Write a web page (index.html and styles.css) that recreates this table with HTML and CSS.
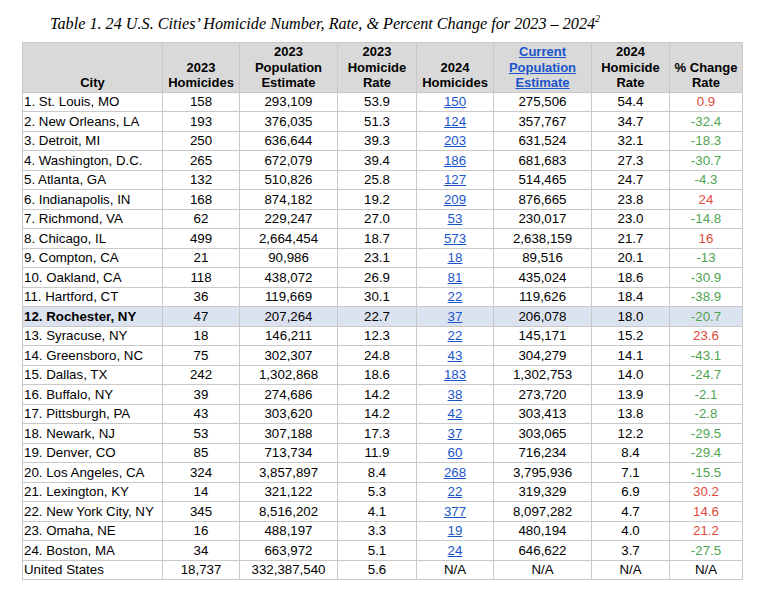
FILE: index.html
```html
<!DOCTYPE html>
<html>
<head>
<meta charset="utf-8">
<link rel="stylesheet" href="styles.css">
</head>
<body>
<p class="title">Table 1. 24 U.S. Cities’ Homicide Number, Rate, &amp; Percent Change for 2023 – 2024<sup>2</sup></p>
<table class="data">
<colgroup>
<col class="c1"><col class="c2"><col class="c3"><col class="c4"><col class="c5"><col class="c6"><col class="c7"><col class="c8">
</colgroup>
<thead>
<tr>
<th>City</th>
<th>2023<br>Homicides</th>
<th>2023<br>Population<br>Estimate</th>
<th>2023<br>Homicide<br>Rate</th>
<th>2024<br>Homicides</th>
<th><a class="lnk" href="#">Current<br>Population<br>Estimate</a></th>
<th>2024<br>Homicide<br>Rate</th>
<th>% Change<br>Rate</th>
</tr>
</thead>
<tbody>
<tr><td class="city">1. St. Louis, MO</td><td>158</td><td>293,109</td><td>53.9</td><td><a class="lnk" href="#">150</a></td><td>275,506</td><td>54.4</td><td class="up">0.9</td></tr>
<tr><td class="city">2. New Orleans, LA</td><td>193</td><td>376,035</td><td>51.3</td><td><a class="lnk" href="#">124</a></td><td>357,767</td><td>34.7</td><td class="down">-32.4</td></tr>
<tr><td class="city">3. Detroit, MI</td><td>250</td><td>636,644</td><td>39.3</td><td><a class="lnk" href="#">203</a></td><td>631,524</td><td>32.1</td><td class="down">-18.3</td></tr>
<tr><td class="city">4. Washington, D.C.</td><td>265</td><td>672,079</td><td>39.4</td><td><a class="lnk" href="#">186</a></td><td>681,683</td><td>27.3</td><td class="down">-30.7</td></tr>
<tr><td class="city">5. Atlanta, GA</td><td>132</td><td>510,826</td><td>25.8</td><td><a class="lnk" href="#">127</a></td><td>514,465</td><td>24.7</td><td class="down">-4.3</td></tr>
<tr><td class="city">6. Indianapolis, IN</td><td>168</td><td>874,182</td><td>19.2</td><td><a class="lnk" href="#">209</a></td><td>876,665</td><td>23.8</td><td class="up">24</td></tr>
<tr><td class="city">7. Richmond, VA</td><td>62</td><td>229,247</td><td>27.0</td><td><a class="lnk" href="#">53</a></td><td>230,017</td><td>23.0</td><td class="down">-14.8</td></tr>
<tr><td class="city">8. Chicago, IL</td><td>499</td><td>2,664,454</td><td>18.7</td><td><a class="lnk" href="#">573</a></td><td>2,638,159</td><td>21.7</td><td class="up">16</td></tr>
<tr><td class="city">9. Compton, CA</td><td>21</td><td>90,986</td><td>23.1</td><td><a class="lnk" href="#">18</a></td><td>89,516</td><td>20.1</td><td class="down">-13</td></tr>
<tr><td class="city">10. Oakland, CA</td><td>118</td><td>438,072</td><td>26.9</td><td><a class="lnk" href="#">81</a></td><td>435,024</td><td>18.6</td><td class="down">-30.9</td></tr>
<tr><td class="city">11. Hartford, CT</td><td>36</td><td>119,669</td><td>30.1</td><td><a class="lnk" href="#">22</a></td><td>119,626</td><td>18.4</td><td class="down">-38.9</td></tr>
<tr class="hl"><td class="city">12. Rochester, NY</td><td>47</td><td>207,264</td><td>22.7</td><td><a class="lnk" href="#">37</a></td><td>206,078</td><td>18.0</td><td class="down">-20.7</td></tr>
<tr><td class="city">13. Syracuse, NY</td><td>18</td><td>146,211</td><td>12.3</td><td><a class="lnk" href="#">22</a></td><td>145,171</td><td>15.2</td><td class="up">23.6</td></tr>
<tr><td class="city">14. Greensboro, NC</td><td>75</td><td>302,307</td><td>24.8</td><td><a class="lnk" href="#">43</a></td><td>304,279</td><td>14.1</td><td class="down">-43.1</td></tr>
<tr><td class="city">15. Dallas, TX</td><td>242</td><td>1,302,868</td><td>18.6</td><td><a class="lnk" href="#">183</a></td><td>1,302,753</td><td>14.0</td><td class="down">-24.7</td></tr>
<tr><td class="city">16. Buffalo, NY</td><td>39</td><td>274,686</td><td>14.2</td><td><a class="lnk" href="#">38</a></td><td>273,720</td><td>13.9</td><td class="down">-2.1</td></tr>
<tr><td class="city">17. Pittsburgh, PA</td><td>43</td><td>303,620</td><td>14.2</td><td><a class="lnk" href="#">42</a></td><td>303,413</td><td>13.8</td><td class="down">-2.8</td></tr>
<tr><td class="city">18. Newark, NJ</td><td>53</td><td>307,188</td><td>17.3</td><td><a class="lnk" href="#">37</a></td><td>303,065</td><td>12.2</td><td class="down">-29.5</td></tr>
<tr><td class="city">19. Denver, CO</td><td>85</td><td>713,734</td><td>11.9</td><td><a class="lnk" href="#">60</a></td><td>716,234</td><td>8.4</td><td class="down">-29.4</td></tr>
<tr><td class="city">20. Los Angeles, CA</td><td>324</td><td>3,857,897</td><td>8.4</td><td><a class="lnk" href="#">268</a></td><td>3,795,936</td><td>7.1</td><td class="down">-15.5</td></tr>
<tr><td class="city">21. Lexington, KY</td><td>14</td><td>321,122</td><td>5.3</td><td><a class="lnk" href="#">22</a></td><td>319,329</td><td>6.9</td><td class="up">30.2</td></tr>
<tr><td class="city">22. New York City, NY</td><td>345</td><td>8,516,202</td><td>4.1</td><td><a class="lnk" href="#">377</a></td><td>8,097,282</td><td>4.7</td><td class="up">14.6</td></tr>
<tr><td class="city">23. Omaha, NE</td><td>16</td><td>488,197</td><td>3.3</td><td><a class="lnk" href="#">19</a></td><td>480,194</td><td>4.0</td><td class="up">21.2</td></tr>
<tr><td class="city">24. Boston, MA</td><td>34</td><td>663,972</td><td>5.1</td><td><a class="lnk" href="#">24</a></td><td>646,622</td><td>3.7</td><td class="down">-27.5</td></tr>
<tr><td class="city">United States</td><td>18,737</td><td>332,387,540</td><td>5.6</td><td>N/A</td><td>N/A</td><td>N/A</td><td>N/A</td></tr>
</tbody>
</table>
</body>
</html>
```
FILE: styles.css
```css
html, body {
  margin: 0;
  padding: 0;
  background: #ffffff;
}
body {
  font-family: "Liberation Sans", Arial, sans-serif;
  color: #000;
}
.title {
  margin: 0;
  padding: 14px 0 0 50px;
  height: 28px;
  font-family: "Liberation Serif", "Times New Roman", serif;
  font-style: italic;
  font-size: 16.2px;
  line-height: 20px;
}
.title sup {
  font-size: 10px;
  line-height: 0;
  vertical-align: 7px;
}
.data {
  margin-left: 22px;
  border-collapse: collapse;
  table-layout: fixed;
  width: 720px;
  font-size: 13.3px;
}
.c1 { width: 140px; }
.c2 { width: 77px; }
.c3 { width: 98px; }
.c4 { width: 79px; }
.c5 { width: 77px; }
.c6 { width: 98px; }
.c7 { width: 78px; }
.c8 { width: 73px; }
.data th, .data td {
  border: 1px solid #c9c9c9;
}
.data th {
  background: #d9d9d9;
  font-size: 13px;
  font-weight: bold;
  line-height: 15.5px;
  vertical-align: bottom;
  text-align: center;
  padding: 1px 2px 1px;
  height: 46px;
}
.data td {
  text-align: center;
  height: 18.5px;
  padding: 0 2px;
  line-height: 15px;
  vertical-align: middle;
  white-space: nowrap;
}
.data td.city {
  text-align: left;
  padding-left: 1px;
}
.lnk {
  color: #1a55cc;
  text-decoration: underline;
}
.up { color: #e04a3c; }
.down { color: #4fa451; }
.hl td {
  background: #dce3f0;
  font-weight: bold;
}
.hl td.up, .hl td.down, .hl td:nth-child(n+2) {
  font-weight: normal;
}
```
